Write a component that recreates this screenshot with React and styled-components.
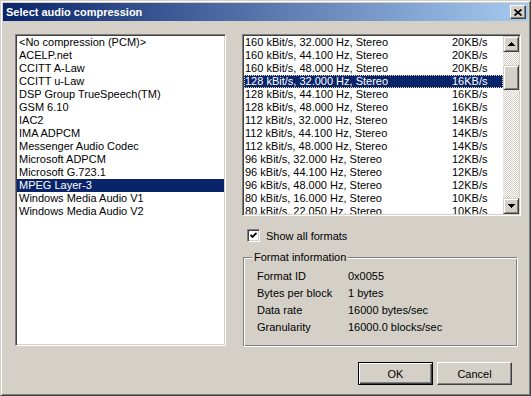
import { Fragment } from "react";
import styled, { createGlobalStyle } from "styled-components";

const GlobalStyle = createGlobalStyle`
  html, body {
    margin: 0;
    padding: 0;
    background: #d4d0c8;
  }
  body {
    font-family: "Liberation Sans", Arial, sans-serif;
    font-size: 11px;
    color: #000;
  }
`;

const Window = styled.div`
  width: 531px;
  height: 396px;
  box-sizing: border-box;
  background: #d4d0c8;
  border: 1px solid;
  border-color: #d4d0c8 #404040 #404040 #d4d0c8;
  box-shadow: inset 1px 1px #fff, inset -1px -1px #808080;
  padding: 2px;
  display: flex;
  flex-direction: column;
`;

const TitleBar = styled.div`
  height: 18px;
  flex: none;
  background: linear-gradient(to right, #0a246a, #a6caf0);
  display: flex;
  align-items: center;
  justify-content: space-between;
  padding: 0 2px 0 3px;
`;

const Title = styled.span`
  color: #fff;
  font-weight: bold;
  font-size: 11px;
`;

const CloseButton = styled.div`
  width: 16px;
  height: 14px;
  box-sizing: border-box;
  background: #d4d0c8;
  border: 1px solid;
  border-color: #fff #404040 #404040 #fff;
  box-shadow: inset -1px -1px #808080;
  display: flex;
  align-items: center;
  justify-content: center;
`;

const Body = styled.div`
  flex: 1;
  display: flex;
  flex-direction: column;
  padding: 13px 7px 8px 12px;
`;

const MainRow = styled.div`
  display: flex;
  gap: 16px;
  height: 312px;
`;

const Sunken = styled.div`
  box-sizing: border-box;
  background: #fff;
  border: 1px solid;
  border-color: #808080 #fff #fff #808080;
  box-shadow: inset 1px 1px #404040, inset -1px -1px #d4d0c8;
  padding: 1px;
`;

const LeftList = styled(Sunken)`
  width: 211px;
  height: 312px;
  overflow: hidden;
`;

const Item = styled.div`
  height: 13px;
  line-height: 13px;
  padding-left: 2px;
  white-space: nowrap;
  background: ${(p) => (p.$selected ? "#0a246a" : "transparent")};
  color: ${(p) => (p.$selected ? "#fff" : "#000")};
`;

const RightCol = styled.div`
  width: 279px;
  display: flex;
  flex-direction: column;
`;

const RightList = styled(Sunken)`
  height: 182px;
  display: flex;
  flex: none;
`;

const Rows = styled.div`
  flex: 1;
  overflow: hidden;
`;

const FormatRow = styled.div`
  display: grid;
  grid-template-columns: 207px 1fr;
  height: 13px;
  line-height: 13px;
  padding-left: 1px;
  white-space: nowrap;
  box-sizing: border-box;
  background: ${(p) => (p.$selected ? "#0a246a" : "transparent")};
  color: ${(p) => (p.$selected ? "#fff" : "#000")};
  outline: ${(p) => (p.$selected ? "1px dotted #e8dca0" : "none")};
  outline-offset: -1px;
`;

const Scrollbar = styled.div`
  width: 16px;
  display: flex;
  flex-direction: column;
  background: repeating-conic-gradient(#d4d0c8 0 25%, #fff 0 50%) 0 0 / 2px 2px;
`;

const Raised = styled.div`
  box-sizing: border-box;
  background: #d4d0c8;
  border: 1px solid;
  border-color: #d4d0c8 #404040 #404040 #d4d0c8;
  box-shadow: inset 1px 1px #fff, inset -1px -1px #808080;
`;

const ScrollButton = styled(Raised)`
  width: 16px;
  height: 16px;
  flex: none;
  display: flex;
  align-items: center;
  justify-content: center;
`;

const Track = styled.div`
  flex: 1;
  display: flex;
  flex-direction: column;
`;

const Thumb = styled(Raised)`
  width: 16px;
  height: 25px;
  margin-top: ${(p) => p.$offset}px;
`;

const CheckRow = styled.label`
  display: flex;
  align-items: center;
  margin-top: 13px;
  padding-left: 5px;
  height: 13px;
`;

const CheckBox = styled(Sunken)`
  width: 13px;
  height: 13px;
  display: flex;
  align-items: center;
  justify-content: center;
  padding: 0;
`;

const CheckLabel = styled.span`
  margin-left: 6px;
`;

const Group = styled.fieldset`
  margin: 9px 0 0 1px;
  width: 275px;
  box-sizing: border-box;
  min-width: 0;
  flex: 1;
  padding: 0;
  border: 1px solid;
  border-color: #808080 #fff #fff #808080;
  box-shadow: inset 1px 1px #fff, inset -1px -1px #808080;
`;

const Legend = styled.legend`
  margin-left: 8px;
  padding: 0 2px;
  line-height: 13px;
  background: #d4d0c8;
`;

const InfoGrid = styled.div`
  display: grid;
  grid-template-columns: 91px 1fr;
  grid-auto-rows: 17px;
  align-items: center;
  padding: 3px 0 11px 13px;
`;

const ButtonRow = styled.div`
  display: flex;
  justify-content: flex-end;
  gap: 4px;
  margin-top: 16px;
  padding-right: 9px;
`;

const Button = styled.button`
  width: 75px;
  height: 23px;
  box-sizing: border-box;
  padding: 0;
  font-family: "Liberation Sans", Arial, sans-serif;
  font-size: 11px;
  color: #000;
  background: #d4d0c8;
  border: 1px solid;
  border-color: ${(p) => (p.$default ? "#000" : "#fff #404040 #404040 #fff")};
  box-shadow: ${(p) =>
    p.$default
      ? "inset 1px 1px #fff, inset -1px -1px #404040, inset -2px -2px #808080"
      : "inset -1px -1px #808080"};
`;

const codecs = [
  "<No compression (PCM)>",
  "ACELP.net",
  "CCITT A-Law",
  "CCITT u-Law",
  "DSP Group TrueSpeech(TM)",
  "GSM 6.10",
  "IAC2",
  "IMA ADPCM",
  "Messenger Audio Codec",
  "Microsoft ADPCM",
  "Microsoft G.723.1",
  "MPEG Layer-3",
  "Windows Media Audio V1",
  "Windows Media Audio V2",
];

const formats = [
  ["160", "32.000", "20"],
  ["160", "44.100", "20"],
  ["160", "48.000", "20"],
  ["128", "32.000", "16"],
  ["128", "44.100", "16"],
  ["128", "48.000", "16"],
  ["112", "32.000", "14"],
  ["112", "44.100", "14"],
  ["112", "48.000", "14"],
  ["96", "32.000", "12"],
  ["96", "44.100", "12"],
  ["96", "48.000", "12"],
  ["80", "16.000", "10"],
  ["80", "22.050", "10"],
];

const info = [
  ["Format ID", "0x0055"],
  ["Bytes per block", "1 bytes"],
  ["Data rate", "16000 bytes/sec"],
  ["Granularity", "16000.0 blocks/sec"],
];

const Arrow = ({ down }) => (
  <svg width="7" height="4" viewBox="0 0 7 4" shapeRendering="crispEdges">
    <polygon points={down ? "0,0 7,0 3.5,4" : "3.5,0 7,4 0,4"} fill="#000" />
  </svg>
);

export default function App() {
  return (
    <>
      <GlobalStyle />
      <Window>
        <TitleBar>
          <Title>Select audio compression</Title>
          <CloseButton>
            <svg width="8" height="7" viewBox="0 0 8 7">
              <path d="M0.5 0.5 L7.5 6.5 M7.5 0.5 L0.5 6.5" stroke="#000" strokeWidth="1.7" />
            </svg>
          </CloseButton>
        </TitleBar>
        <Body>
          <MainRow>
            <LeftList>
              {codecs.map((c, i) => (
                <Item key={c} $selected={i === 11}>
                  {c}
                </Item>
              ))}
            </LeftList>
            <RightCol>
              <RightList>
                <Rows>
                  {formats.map(([rate, hz, kb], i) => (
                    <FormatRow key={i} $selected={i === 3}>
                      <span>{`${rate} kBit/s, ${hz} Hz, Stereo`}</span>
                      <span>{`${kb}KB/s`}</span>
                    </FormatRow>
                  ))}
                </Rows>
                <Scrollbar>
                  <ScrollButton>
                    <Arrow />
                  </ScrollButton>
                  <Track>
                    <Thumb $offset={13} />
                  </Track>
                  <ScrollButton>
                    <Arrow down />
                  </ScrollButton>
                </Scrollbar>
              </RightList>
              <CheckRow>
                <CheckBox>
                  <svg width="7" height="7" viewBox="0 0 7 7">
                    <polyline points="0.5,3 2.5,5 6.5,1" fill="none" stroke="#000" strokeWidth="1.8" />
                  </svg>
                </CheckBox>
                <CheckLabel>Show all formats</CheckLabel>
              </CheckRow>
              <Group>
                <Legend>Format information</Legend>
                <InfoGrid>
                  {info.map(([k, v]) => (
                    <Fragment key={k}>
                      <span>{k}</span>
                      <span>{v}</span>
                    </Fragment>
                  ))}
                </InfoGrid>
              </Group>
            </RightCol>
          </MainRow>
          <ButtonRow>
            <Button $default>OK</Button>
            <Button>Cancel</Button>
          </ButtonRow>
        </Body>
      </Window>
    </>
  );
}
